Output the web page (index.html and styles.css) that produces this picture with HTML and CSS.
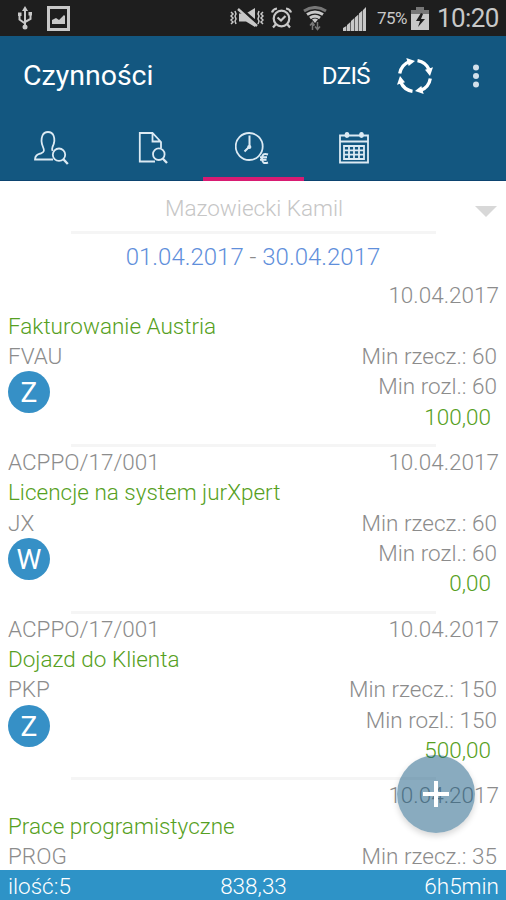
FILE: index.html
```
<!DOCTYPE html>
<html lang="pl">
<head>
  <meta charset="UTF-8" />
  <title>Czynności</title>
  <link rel="stylesheet" href="styles.css">
</head>
<body>
  <div class="status-bar">
    <svg class="icon-usb" width="16" height="24" viewBox="0 0 16 24" fill="none" stroke="#c8c8c8" stroke-width="2">
      <path d="M8 4v17M2.500 9v4.500L8 17.500M13.500 8v5L8 16" />
      <path d="M8 0l3 5H5zM1 6.500h3.500v3.500H1zM11.500 6h3.500v3.500h-3.500z" fill="#c8c8c8" stroke="none" />
      <circle cx="8" cy="21" r="2.500" fill="#c8c8c8" stroke="none" />
    </svg>
    <svg class="icon-image" width="23" height="25" viewBox="0 0 23 25">
      <path d="M1.500 1.500h20v22h-20z" fill="none" stroke="#c8c8c8" stroke-width="3" />
      <path d="M5 18v-4l4-2 3 2 5-5 1 1v8z" fill="#c8c8c8" />
    </svg>
    <div class="status-right">
      <svg class="icon-mute" width="34" height="20" viewBox="0 0 34 20" fill="none" stroke="#c8c8c8" stroke-width="1.500">
        <path d="M1 4l2 2-2 2 2 2-2 2 2 2-2 2M5 3l1 3-1 2 1 3-1 2 1 3M29 3l-1 3 1 2-1 3 1 2-1 3M33 4l-2 2 2 2-2 2 2 2-2 2 2 2" />
        <path d="M9 5.500h7L25 0v19l-9-5.500H9z" fill="#c8c8c8" stroke="none" />
        <path d="M10 0l17 15" stroke="#1e1e1e" stroke-width="3" />
        <path d="M8 1l19 17" stroke-width="2.500" />
      </svg>
      <svg class="icon-alarm" width="21" height="22" viewBox="0 0 21 22" fill="none" stroke="#c8c8c8" stroke-width="2.200">
        <circle cx="10.500" cy="11.500" r="7.800" />
        <path d="M6.500 10.500l3.500 3 4.500-4.500M1 5.500Q2 2 6 1.500M20 5.500Q19 2 15 1.500M5 17l-3 3.500M16 17l3 3.500" />
      </svg>
      <svg class="icon-wifi" width="24" height="25" viewBox="0 0 24 25" fill="none" stroke="#c8c8c8" stroke-width="3">
        <path d="M1 5q11-7 22 0" stroke="#777" />
        <path d="M4 8.500q8-5 16 0M7 12q5-3.500 10 0" />
        <path d="M9 13.500q3-2 6 0L12 17z" fill="#c8c8c8" stroke="none" />
        <path d="M9.500 24v-7M7 19.500l2.500-3 2 3M14.500 16v7M12 20.500l2.500 3 2.500-3" stroke="#777" stroke-width="1.500" />
      </svg>
      <svg class="icon-signal" width="23" height="25" viewBox="0 0 23 25" fill="#c8c8c8">
        <path d="M0 21l3.400-2v5H0zM4 18l3.400-3v9H4zM8 14l3.400-3v13H8zM12 10.500l3.400-3V24H12zM16 6.500l3.400-3V24H16zM20 3l3-3v24h-3z" />
      </svg>
      <span class="battery-level">75%</span>
      <svg class="icon-battery" width="18" height="23" viewBox="0 0 18 23">
        <path d="M0 3h5V0h8v3h5v4H0z" fill="#777" />
        <path d="M0 7h18v16H0z" fill="#c8c8c8" />
        <path d="M10 6l-5 8h4l-2 6 7-8h-4l2-5z" fill="#1e1e1e" />
      </svg>
      <span class="clock">10:20</span>
    </div>
  </div>

  <header class="app-bar">
    <h1 class="app-title">Czynności</h1>
    <span class="today">DZIŚ</span>
    <svg class="icon-sync" width="36" height="36" viewBox="0 0 36 36">
      <g id="syncArrow">
        <path d="M2.700 15.500A15.500 15.500 0 0 1 12 3.700" fill="none" stroke="#fff" stroke-width="3.300" />
        <path d="M9.300 0l8.700 3-6.300 5z" fill="#fff" />
      </g>
      <use href="#syncArrow" transform="rotate(90 18 18)" />
      <use href="#syncArrow" transform="rotate(180 18 18)" />
      <use href="#syncArrow" transform="rotate(270 18 18)" />
    </svg>
    <svg class="icon-more" width="6" height="24" viewBox="0 0 6 24" fill="#d3e0ea">
      <circle cx="3" cy="3.500" r="3" />
      <circle cx="3" cy="12" r="3" />
      <circle cx="3" cy="20.500" r="3" />
    </svg>
  </header>

  <nav class="tabs">
    <a class="tab">
      <svg width="36" height="36" viewBox="0 0 36 36" fill="none" stroke="#dceaf3" stroke-width="1.800">
        <path d="M20 29.500H2c0-4.500 3-5 6-6.200 3.500-1.300 3.500-3 2-6.300C8.500 13.500 8 9 9.500 5.500 11.500.8 18.500.8 20.500 5.500 22 9 21.500 13 19.500 17c-.6 1.500-.5 2.500 0 4" />
        <circle cx="26" cy="24.700" r="6.200" />
        <path d="M30.200 29l4.600 5" stroke-width="2.400" />
      </svg>
    </a>
    <a class="tab">
      <svg width="36" height="36" viewBox="0 0 36 36" fill="none" stroke="#dceaf3" stroke-width="1.800">
        <path d="M21 31.500H5.800V3h12.700l8.500 9v6M18.500 3v8.500H27" />
        <circle cx="24.800" cy="24.200" r="5.800" />
        <path d="M28.700 28.500l4.300 4.500" stroke-width="2.400" />
      </svg>
    </a>
    <a class="tab active">
      <svg width="36" height="36" viewBox="0 0 36 36" fill="none" stroke="#dceaf3" stroke-width="1.800">
        <circle cx="14.200" cy="16.500" r="13.500" />
        <path d="M14.500 5.500v11l-5 5" stroke-width="2" />
        <circle cx="14.300" cy="17" r="1.200" />
        <path d="M33 24.500c-4-1.500-6 0-6 4s2 5.500 6 4M25 27.300h7M25 29.800h6.500" stroke-width="2" />
      </svg>
    </a>
    <a class="tab">
      <svg width="36" height="36" viewBox="0 0 36 36" fill="none" stroke="#dceaf3" stroke-width="1.800">
        <path d="M3 5.500h28v27H3z" />
        <path d="M3 11.500h28" stroke-width="2" />
        <path d="M7 16h20v13H7zM7 20.300h20M7 24.600h20M12 16v13M17 16v13M22 16v13" />
        <path d="M8.500 5.500a1.500 2.500 0 1 1 3 0a1.500 1.500 0 1 1-3 0M23 5.500a1.500 2.500 0 1 1 3 0a1.500 1.500 0 1 1-3 0" fill="#dceaf3" />
      </svg>
    </a>
  </nav>

  <main class="content">
    <div class="person">
      <span class="person-name">Mazowiecki Kamil</span>
      <span class="caret"></span>
    </div>
    <div class="period">01.04.2017 <span class="dash">-</span> 30.04.2017</div>

    <div class="entry">
      <div class="row"><span></span><span class="date">10.04.2017</span></div>
      <div class="row name">Fakturowanie Austria</div>
      <div class="details">
        <div>
          <div class="row code">FVAU</div>
          <div class="avatar">Z</div>
        </div>
        <div class="numbers">
          <div>Min rzecz.: 60</div>
          <div>Min rozl.: 60</div>
          <div class="amount">100,00</div>
        </div>
      </div>
    </div>

    <div class="entry">
      <div class="row"><span class="case">ACPPO/17/001</span><span class="date">10.04.2017</span></div>
      <div class="row name">Licencje na system jurXpert</div>
      <div class="details">
        <div>
          <div class="row code">JX</div>
          <div class="avatar">W</div>
        </div>
        <div class="numbers">
          <div>Min rzecz.: 60</div>
          <div>Min rozl.: 60</div>
          <div class="amount">0,00</div>
        </div>
      </div>
    </div>

    <div class="entry">
      <div class="row"><span class="case">ACPPO/17/001</span><span class="date">10.04.2017</span></div>
      <div class="row name">Dojazd do Klienta</div>
      <div class="details">
        <div>
          <div class="row code">PKP</div>
          <div class="avatar">Z</div>
        </div>
        <div class="numbers">
          <div>Min rzecz.: 150</div>
          <div>Min rozl.: 150</div>
          <div class="amount">500,00</div>
        </div>
      </div>
    </div>

    <div class="entry">
      <div class="row"><span></span><span class="date">10.04.2017</span></div>
      <div class="row name">Prace programistyczne</div>
      <div class="details">
        <div class="row code">PROG</div>
        <div class="numbers">
          <div>Min rzecz.: 35</div>
        </div>
      </div>
    </div>
  </main>

  <footer class="summary">
    <span>ilość:5</span>
    <span class="total">838,33</span>
    <span class="time">6h5min</span>
  </footer>

  <button class="fab">
    <svg width="26" height="26" viewBox="0 0 26 26" stroke="#fff" stroke-width="4">
      <path d="M13 0v26M0 13h26" />
    </svg>
  </button>
</body>
</html>
```
FILE: styles.css
```
* {
  box-sizing: border-box;
}
body {
  margin: 0;
  height: 900px;
  display: flex;
  flex-direction: column;
  overflow: hidden;
  position: relative;
  font-family: Roboto, sans-serif;
  font-weight: 300;
  font-size: 22.5px;
  color: #8c8c8c;
  background: #fff;
}
svg {
  display: block;
  flex: none;
}

/* system status bar */
.status-bar {
  height: 36px;
  flex: none;
  display: flex;
  align-items: center;
  padding: 0 7px 0 17px;
  background: #1e1e1e;
  color: #c8c8c8;
  font-weight: 400;
}
.icon-image {
  margin-left: 14px;
}
.status-right {
  margin-left: auto;
  display: flex;
  align-items: center;
}
.icon-alarm {
  margin-left: 7px;
}
.icon-wifi {
  margin-left: 11px;
}
.icon-signal {
  margin: 2px 0 0 16px;
}
.battery-level {
  margin-left: 11px;
  width: 31px;
  font-size: 17px;
  letter-spacing: -0.6px;
}
.icon-battery {
  margin-left: 3px;
}
.clock {
  margin-left: 8px;
  width: 62px;
  font-size: 26px;
  letter-spacing: -0.6px;
}

/* app bar */
.app-bar {
  height: 79px;
  flex: none;
  display: flex;
  align-items: center;
  padding: 0 27px 0 23px;
  background: #135780;
  color: #fff;
}
.app-title {
  margin: 0;
  flex: 1;
  font-size: 28.5px;
  font-weight: 400;
}
.today {
  font-size: 24px;
  font-weight: 400;
  letter-spacing: -0.6px;
}
.icon-sync {
  margin-left: 27px;
}
.icon-more {
  margin-left: 40px;
}

.tabs {
  height: 66px;
  flex: none;
  display: grid;
  grid-template-columns: repeat(4, 101.4px);
  background: #135780;
  border-bottom: 1px solid #0c4470;
}
.tab {
  display: flex;
  justify-content: center;
  padding-top: 15px;
  margin-bottom: -1px;
}
.tab.active {
  border-bottom: 4px solid #d81b72;
}

/* list */
.content {
  flex: 1;
  min-height: 0;
  overflow: hidden;
}
.person {
  height: 53px;
  display: flex;
  justify-content: center;
  padding: 12px 0 0 2px;
  line-height: 30px;
  position: relative;
  color: #c6c6c6;
}
.person::after,
.entry + .entry::before {
  content: "";
  position: absolute;
  left: 71px;
  right: 70px;
  height: 3px;
  background: #f5f5f5;
}
.person::after {
  bottom: 0;
}
.caret {
  position: absolute;
  right: 9px;
  top: 25px;
  border: 11px solid transparent;
  border-top-color: #d8d8d8;
  border-bottom: 0;
}
.period {
  height: 46.4px;
  line-height: 46px;
  text-align: center;
  font-size: 24px;
  color: #5f8fdb;
}
.dash {
  color: #8c8c8c;
}
.entry {
  height: 166.7px;
  padding: 0 7px 0 8px;
  line-height: 30.3px;
  position: relative;
}
.entry + .entry::before {
  top: -3px;
}
.row {
  display: flex;
  justify-content: space-between;
  height: 30.3px;
}
.name {
  color: #56a022;
}
.details {
  display: flex;
  justify-content: space-between;
}
.avatar {
  width: 42px;
  height: 42px;
  border-radius: 50%;
  background: #3690c6;
  color: #fff;
  font-size: 28px;
  font-weight: 400;
  line-height: 43px;
  text-align: center;
}
.numbers {
  text-align: right;
  padding-right: 2px;
}
.amount {
  padding-right: 6px;
  color: #56a022;
}

.summary {
  height: 30px;
  flex: none;
  display: grid;
  grid-template-columns: 1fr 1fr 1fr;
  padding: 0 7px 0 8px;
  line-height: 32px;
  background: #2e93c7;
  color: #fff;
}
.total {
  text-align: center;
}
.time {
  text-align: right;
}

.fab {
  position: absolute;
  right: 31px;
  bottom: 67px;
  width: 78px;
  height: 78px;
  padding: 0;
  border: none;
  border-radius: 50%;
  display: flex;
  align-items: center;
  justify-content: center;
  background: rgba(19, 87, 128, 0.5);
  box-shadow: 0 3px 6px rgba(0, 0, 0, 0.16);
}
```
